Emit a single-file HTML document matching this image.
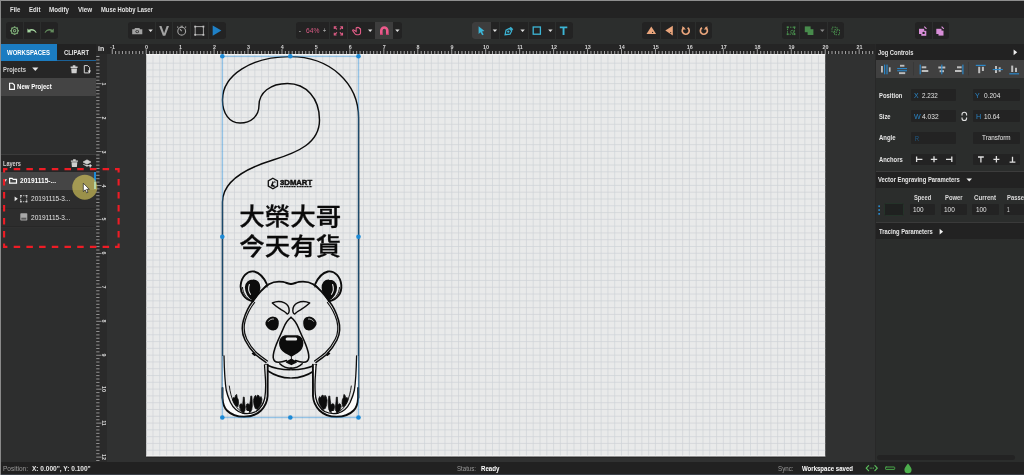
<!DOCTYPE html>
<html lang="zh-Hant">
<head>
<meta charset="utf-8">
<title>Muse Hobby Laser</title>
<style>
*{box-sizing:border-box;margin:0;padding:0}
html,body{width:1024px;height:475px;overflow:hidden}
body{position:relative;background:#303131;color:#e4e4e4;font-family:"Liberation Sans","Noto Sans CJK TC",sans-serif;font-size:8px;line-height:1}
#app{position:absolute;left:0;top:0;width:1024px;height:475px;overflow:hidden;will-change:transform;background:#303131;contain:strict}
.a{position:absolute}
.t{position:absolute;white-space:nowrap;line-height:10px;height:10px;font-weight:bold;color:#e2e2e2;transform-origin:0 50%}
.n{font-weight:normal}
.dim{color:#8d8d8d}
svg{position:absolute;overflow:visible}
#menubar{left:0;top:0;width:1024px;height:18px;background:#232323}
#toolbar{left:0;top:18px;width:1024px;height:26px;background:#2c2e2d}
.grp{position:absolute;top:22px;height:17px;background:#232323;border-radius:3px}
.hl{position:absolute;top:0;height:17px;background:#3d3d3d}
.sep{position:absolute;top:0;width:1px;height:17px;background:#2c2e2d}
#left{left:0;top:44px;width:97px;height:418px;background:#303030}
#right{left:875px;top:44px;width:149px;height:418px;background:#2b2d2c;border-left:1px solid #282828}
#status{left:0;top:462px;width:1024px;height:13px;background:#212121}
#rulerTop{left:96px;top:44px;width:779px;height:10px;background:#252525}
#rulerLeft{left:96px;top:44px;width:11px;height:418px;background:#2a2a2a}
#work{left:107px;top:54px;width:768px;height:408px;background:#303131;overflow:hidden}
.inp{position:absolute;height:12px;background:#232323;border-radius:1px}
.rl{position:absolute;font-size:5.4px;line-height:6px;color:#d6d6d6;font-weight:bold}
#edgeT{left:0;top:0;width:1024px;height:1px;background:#8f8f8f}
#edgeL{left:0;top:0;width:1px;height:475px;background:#8a8a8a}
</style>
</head>
<body>
<div id="app">

<div class="a" id="menubar"></div>
<div class="a" id="toolbar"></div>
<div class="a" id="left"></div>
<div class="a" id="work">
<svg id="canvas" width="768" height="408" viewBox="107 54 768 408" style="left:0;top:0">
<rect x="146.2" y="54" width="679.00" height="402.60" fill="#e9eaea"/>
<path d="M152.99 54V456.6M159.78 54V456.6M166.57 54V456.6M173.36 54V456.6M180.15 54V456.6M186.94 54V456.6M193.73 54V456.6M200.52 54V456.6M207.31 54V456.6M214.10 54V456.6M220.89 54V456.6M227.68 54V456.6M234.47 54V456.6M241.26 54V456.6M248.05 54V456.6M254.84 54V456.6M261.63 54V456.6M268.42 54V456.6M275.21 54V456.6M282.00 54V456.6M288.79 54V456.6M295.58 54V456.6M302.37 54V456.6M309.16 54V456.6M315.95 54V456.6M322.74 54V456.6M329.53 54V456.6M336.32 54V456.6M343.11 54V456.6M349.90 54V456.6M356.69 54V456.6M363.48 54V456.6M370.27 54V456.6M377.06 54V456.6M383.85 54V456.6M390.64 54V456.6M397.43 54V456.6M404.22 54V456.6M411.01 54V456.6M417.80 54V456.6M424.59 54V456.6M431.38 54V456.6M438.17 54V456.6M444.96 54V456.6M451.75 54V456.6M458.54 54V456.6M465.33 54V456.6M472.12 54V456.6M478.91 54V456.6M485.70 54V456.6M492.49 54V456.6M499.28 54V456.6M506.07 54V456.6M512.86 54V456.6M519.65 54V456.6M526.44 54V456.6M533.23 54V456.6M540.02 54V456.6M546.81 54V456.6M553.60 54V456.6M560.39 54V456.6M567.18 54V456.6M573.97 54V456.6M580.76 54V456.6M587.55 54V456.6M594.34 54V456.6M601.13 54V456.6M607.92 54V456.6M614.71 54V456.6M621.50 54V456.6M628.29 54V456.6M635.08 54V456.6M641.87 54V456.6M648.66 54V456.6M655.45 54V456.6M662.24 54V456.6M669.03 54V456.6M675.82 54V456.6M682.61 54V456.6M689.40 54V456.6M696.19 54V456.6M702.98 54V456.6M709.77 54V456.6M716.56 54V456.6M723.35 54V456.6M730.14 54V456.6M736.93 54V456.6M743.72 54V456.6M750.51 54V456.6M757.30 54V456.6M764.09 54V456.6M770.88 54V456.6M777.67 54V456.6M784.46 54V456.6M791.25 54V456.6M798.04 54V456.6M804.83 54V456.6M811.62 54V456.6M818.41 54V456.6M146.2 63.18H825.20M146.2 69.97H825.20M146.2 76.76H825.20M146.2 83.55H825.20M146.2 90.34H825.20M146.2 97.13H825.20M146.2 103.92H825.20M146.2 110.71H825.20M146.2 117.50H825.20M146.2 124.29H825.20M146.2 131.08H825.20M146.2 137.87H825.20M146.2 144.66H825.20M146.2 151.45H825.20M146.2 158.24H825.20M146.2 165.03H825.20M146.2 171.82H825.20M146.2 178.61H825.20M146.2 185.40H825.20M146.2 192.19H825.20M146.2 198.98H825.20M146.2 205.77H825.20M146.2 212.56H825.20M146.2 219.35H825.20M146.2 226.14H825.20M146.2 232.93H825.20M146.2 239.72H825.20M146.2 246.51H825.20M146.2 253.30H825.20M146.2 260.09H825.20M146.2 266.88H825.20M146.2 273.67H825.20M146.2 280.46H825.20M146.2 287.25H825.20M146.2 294.04H825.20M146.2 300.83H825.20M146.2 307.62H825.20M146.2 314.41H825.20M146.2 321.20H825.20M146.2 327.99H825.20M146.2 334.78H825.20M146.2 341.57H825.20M146.2 348.36H825.20M146.2 355.15H825.20M146.2 361.94H825.20M146.2 368.73H825.20M146.2 375.52H825.20M146.2 382.31H825.20M146.2 389.10H825.20M146.2 395.89H825.20M146.2 402.68H825.20M146.2 409.47H825.20M146.2 416.26H825.20M146.2 423.05H825.20M146.2 429.84H825.20M146.2 436.63H825.20M146.2 443.42H825.20M146.2 450.21H825.20" stroke="#cfd2d7" stroke-width=".7" fill="none"/>
<path d="M146.2 54.7H825.20" stroke="#f4f4f4" stroke-width="1.3" fill="none"/><path d="M146.2 456.10H825.20" stroke="#fbfbfb" stroke-width="1" fill="none"/>
<path d="M146.2 457.10H825.20" stroke="#232323" stroke-width="1" fill="none"/>
<g id="art" fill="none" stroke="#0c0c0c" stroke-width="1.45" stroke-linejoin="round" stroke-linecap="round">
<path id="hanger" d="M222.500 398L222.500 202C222.500 183 242 169.500 273 160C298 152.300 319.500 143 319.500 120C319.500 98 306 83.500 287.400 83.500C270 83.500 259 93 259 105.300C259 116 251 123 240 123C229 123 222.500 113 222.500 100C222.500 75 252 56.600 290 56.600C330 56.600 358.600 83 358.600 118L358.600 398"/>
</g>
<g id="logo" fill="#111" stroke="none">
<path d="M272.900 178.200l4.600 2.650v5.300l-4.600 2.650-4.600-2.650v-5.300z" fill="none" stroke="#111" stroke-width="1.300"/>
<path d="M270.600 186.200l2-5.200 1.300 1.100-1 2.300 2.200 1.700-.8 1zM274.300 180.600l1.500 1.600-1.300.7z" fill="#111"/>
<text x="280.100" y="184.750" font-family="'Liberation Sans',sans-serif" font-weight="bold" font-size="6.800" stroke="#111" stroke-width=".45" textLength="32" lengthAdjust="spacingAndGlyphs">3DMART</text>
<path d="M280.100 186.600h2.900M283.800 186.600h12.200M296.800 186.600h15.300" stroke="#111" stroke-width="1.200" stroke-dasharray="1.300 .35" fill="none"/>
</g>
<g id="maintext" font-family="'Liberation Sans','Noto Sans CJK TC',sans-serif" font-weight="500" font-size="23.800" fill="#0a0a0a" stroke="#0a0a0a" stroke-width=".3" stroke-linejoin="round">
<text x="239.300" y="225.200" textLength="101.800" lengthAdjust="spacingAndGlyphs">大榮大哥</text>
<text x="239.300" y="255.200" textLength="101.800" lengthAdjust="spacingAndGlyphs">今天有貨</text>
</g>
<g id="bear" fill="none" stroke="#0c0c0c" stroke-width="1.550" stroke-linejoin="round" stroke-linecap="round">
<g id="bearL">
<path d="M266.700 283.900C264.500 279 260 273 254 271.500C247 270.500 241.500 277 240.700 285C240 293 244.500 299.500 253 301.300" stroke-width="1.900"/>
<path d="M242.500 287.500C243 293 245.500 297.500 250.300 300" stroke-width="1"/>
<path d="M253 280.200C257 280 259.800 283.500 259.600 288C259.400 291.500 257.500 295.500 253.500 300C249 298 245.500 292.500 245.700 287C246 283 249 280.300 253 280.200Z" fill="#0c0c0c"/>
<path d="M249.400 284.500C248.300 287.500 248.600 291.500 250.400 294.300" stroke="#e9eaea" stroke-width="1.100"/>
<path d="M264 287.300l2.600-2.800.5 2.600" stroke-width=".8"/>
<path d="M253 301C257 295 262 289 268.800 284.200C273 281.800 279 281.300 283 281.900C286 282.400 288.500 284 291 284" stroke-width="1.900"/>
<path d="M253 301C249 306 245.500 313 243.500 320C241.500 327 242 334 245 340C248 346 251.500 350.500 255 354C258 357 262 359.500 266 362.500"/>
<path d="M254.600 302.500C250.600 307.500 247.200 314 245.200 320.500C243.500 327 244 333.500 246.700 339C249.700 345 253.200 349.500 256.700 352.800C259.700 355.500 263.200 358 267.500 361" stroke-width="1.200"/>
<path d="M252.500 353.500l2.400 1.800-1.300-2.600"/>
<path d="M272.300 303C276 301.300 281 301.300 284.500 302.800C287.500 304.200 289.300 307.500 289.200 310.800C289 313.300 288 314.300 287 313.800C285.500 312 283.500 310.800 281.500 309.800C278.500 308 275 305.500 272.300 303Z" stroke-width="1.400"/>
<path d="M266.200 322.800C267 319.500 270 317.200 273.500 317.400C276.500 317.600 278.200 320 278 323.500C277.900 326.500 276.800 329.300 274 329.600C271 329.800 268.500 328 267.200 326C266.400 325 266 324 266.200 322.800Z" fill="#0c0c0c"/>
<path d="M268.500 321.300C269.700 319.700 271.500 318.800 273.500 319" stroke="#e9eaea" stroke-width=".8"/>
<path d="M291 317.400C288 319.500 285.500 323 283.500 328C281 334 278.500 339 276.500 344C274.500 349 273 353.500 273.200 357.500C273.500 360.500 275.500 362.300 278.500 362.300C281.500 362.300 284 361.500 286.600 360.600"/>
<path d="M279.800 363.700C282 366 286 368.200 291.400 368.200"/>
<path d="M265.600 364.500C272 367.500 281 369.800 290.300 369.800"/>
<path d="M267.200 370.500C274 375 282 378 290.300 378"/>
</g>
<g id="bearR" transform="translate(582 0) scale(-1 1)">
<path d="M266.700 283.900C264.500 279 260 273 254 271.500C247 270.500 241.500 277 240.700 285C240 293 244.500 299.500 253 301.300" stroke-width="1.900"/>
<path d="M242.500 287.500C243 293 245.500 297.500 250.300 300" stroke-width="1"/>
<path d="M253 280.200C257 280 259.800 283.500 259.600 288C259.400 291.500 257.500 295.500 253.500 300C249 298 245.500 292.500 245.700 287C246 283 249 280.300 253 280.200Z" fill="#0c0c0c"/>
<path d="M249.400 284.500C248.300 287.500 248.600 291.500 250.400 294.300" stroke="#e9eaea" stroke-width="1.100"/>
<path d="M264 287.300l2.600-2.800.5 2.600" stroke-width=".8"/>
<path d="M253 301C257 295 262 289 268.800 284.200C273 281.800 279 281.300 283 281.900C286 282.400 288.500 284 291 284" stroke-width="1.900"/>
<path d="M253 301C249 306 245.500 313 243.500 320C241.500 327 242 334 245 340C248 346 251.500 350.500 255 354C258 357 262 359.500 266 362.500"/>
<path d="M254.600 302.500C250.600 307.500 247.200 314 245.200 320.500C243.500 327 244 333.500 246.700 339C249.700 345 253.200 349.500 256.700 352.800C259.700 355.500 263.200 358 267.500 361" stroke-width="1.200"/>
<path d="M252.500 353.500l2.400 1.800-1.300-2.600"/>
<path d="M272.300 303C276 301.300 281 301.300 284.500 302.800C287.500 304.200 289.300 307.500 289.200 310.800C289 313.300 288 314.300 287 313.800C285.500 312 283.500 310.800 281.500 309.800C278.500 308 275 305.500 272.300 303Z" stroke-width="1.400"/>
<path d="M266.200 322.800C267 319.500 270 317.200 273.500 317.400C276.500 317.600 278.200 320 278 323.500C277.900 326.500 276.800 329.300 274 329.600C271 329.800 268.500 328 267.200 326C266.400 325 266 324 266.200 322.800Z" fill="#0c0c0c"/>
<path d="M268.500 321.300C269.700 319.700 271.500 318.800 273.500 319" stroke="#e9eaea" stroke-width=".8"/>
<path d="M291 317.400C288 319.500 285.500 323 283.500 328C281 334 278.500 339 276.500 344C274.500 349 273 353.500 273.200 357.500C273.500 360.500 275.500 362.300 278.500 362.300C281.500 362.300 284 361.500 286.600 360.600"/>
<path d="M279.800 363.700C282 366 286 368.200 291.400 368.200"/>
<path d="M265.600 364.500C272 367.500 281 369.800 290.300 369.800"/>
<path d="M267.200 370.500C274 375 282 378 290.300 378"/>
</g>
<path d="M285 336L297.700 336C300.500 336.500 302.600 339.500 302.600 343C302.600 347 300.500 350.500 297 352.500C295 353.700 293 354.600 291.400 355.800C289.800 354.600 287.500 353.500 285.500 352.500C282 350.500 279.800 347 279.800 343C279.800 339.500 282 336.500 285 336Z" fill="#0c0c0c"/>
<rect x="285.600" y="337.500" width="11.600" height="3" rx="1.500" fill="#e9eaea" stroke="none"/>
<path d="M291.400 355.800V359.500" stroke-width=".9"/>
<path d="M286.600 362.100L291.400 359.300L296.100 362.100L291.400 364.400Z" fill="#0c0c0c"/>
<g id="legL">
<path d="M222.300 356L222.300 398C222.800 404 224.500 408 227 410.500C231 414.500 237 416.800 244 416.800C251 416.800 257 414.500 261 410.500C265 406.500 267.300 401 267.600 396L267.700 364.800L264.500 364.800L265.500 380C265.800 387 265.600 393 264.800 398C263.500 404 260.500 408.500 256 411.500C252 413.500 247 414 242 413C237 411.500 233 407.500 230.500 402.500C228.500 398 227 394 226.200 390C225 382 224.300 370 224 356Z" fill="#fbfbfb" stroke="none"/>
<path d="M222.500 388L222.500 398C222.800 404 224.500 408 227 410.500C231 414.500 237 416.800 244 416.800C251 416.800 257 414.500 261 410.500C265 406.500 267.300 401 267.600 396L267.700 364.800" stroke-width="1.900"/>
<path d="M224 356C224.300 370 225 382 226.200 390C227 394 228.500 398 230.500 402.500C233 407.500 237 411.500 242 413C247 414 252 413.500 256 411.500C260.500 408.500 263.500 404 264.800 398C265.600 393 265.800 387 265.500 380L264.500 364.800" stroke-width="1.300"/>
<path d="M229.300 386C230 392 231.600 398 234 403C236.500 408 240 411.500 244 412.300" stroke-width=".9"/>
<path d="M232.600 399.500L233.400 397.500L234.800 398L235.600 395.200L236.700 394.400L237.200 397.500L238.300 399.800L238.600 403.500L237.800 406.800L236 406L234.200 403.500Z M239.400 406L240.300 404L241.500 403.700L242.600 405.200L243 401L243.300 397L244.300 397.200L244.600 402L245.200 407L244.800 411.500L243 412.600L240.800 410.500Z M246 406.500L246.800 404L248.300 403.700L249.600 405L250.400 400L250.800 396L251.900 396.200L252.200 401L252.300 406L251.500 411L249.500 412.600L247 410.500Z M253.500 400L254.300 397L255.600 395.200L256.500 397.500L257.600 395L259 395.800L259.800 398L261 396.500L262 399L261.500 403L259.800 406.500L257.500 409.300L255.300 408.500L254 405Z" fill="#0c0c0c" stroke-width=".7"/>
<path d="M245.300 411.600h3.200M252.300 410.800l2.600-1.200" stroke="#f4f4f4" stroke-width="1.300"/>
</g>
<g id="legR" transform="translate(580.600 0) scale(-1 1)">
<path d="M222.300 356L222.300 398C222.800 404 224.500 408 227 410.500C231 414.500 237 416.800 244 416.800C251 416.800 257 414.500 261 410.500C265 406.500 267.300 401 267.600 396L267.700 364.800L264.500 364.800L265.500 380C265.800 387 265.600 393 264.800 398C263.500 404 260.500 408.500 256 411.500C252 413.500 247 414 242 413C237 411.500 233 407.500 230.500 402.500C228.500 398 227 394 226.200 390C225 382 224.300 370 224 356Z" fill="#fbfbfb" stroke="none"/>
<path d="M222.500 388L222.500 398C222.800 404 224.500 408 227 410.500C231 414.500 237 416.800 244 416.800C251 416.800 257 414.500 261 410.500C265 406.500 267.300 401 267.600 396L267.700 364.800" stroke-width="1.900"/>
<path d="M224 356C224.300 370 225 382 226.200 390C227 394 228.500 398 230.500 402.500C233 407.500 237 411.500 242 413C247 414 252 413.500 256 411.500C260.500 408.500 263.500 404 264.800 398C265.600 393 265.800 387 265.500 380L264.500 364.800" stroke-width="1.300"/>
<path d="M229.300 386C230 392 231.600 398 234 403C236.500 408 240 411.500 244 412.300" stroke-width=".9"/>
<path d="M232.600 399.500L233.400 397.500L234.800 398L235.600 395.200L236.700 394.400L237.200 397.500L238.300 399.800L238.600 403.500L237.800 406.800L236 406L234.200 403.500Z M239.400 406L240.300 404L241.500 403.700L242.600 405.200L243 401L243.300 397L244.300 397.200L244.600 402L245.200 407L244.800 411.500L243 412.600L240.800 410.500Z M246 406.500L246.800 404L248.300 403.700L249.600 405L250.400 400L250.800 396L251.900 396.200L252.200 401L252.300 406L251.500 411L249.500 412.600L247 410.500Z M253.500 400L254.300 397L255.600 395.200L256.500 397.500L257.600 395L259 395.800L259.800 398L261 396.500L262 399L261.500 403L259.800 406.500L257.500 409.300L255.300 408.500L254 405Z" fill="#0c0c0c" stroke-width=".7"/>
<path d="M245.300 411.600h3.200M252.300 410.800l2.600-1.200" stroke="#f4f4f4" stroke-width="1.300"/>
</g>
</g>
<g id="sel" fill="none" stroke="#2f95e0" stroke-width="1">
<rect x="222.400" y="56.400" width="136.100" height="361.100" stroke-width="1.400" stroke-opacity=".45"/>
<g fill="#1d8ad6" stroke="none">
<circle cx="222.300" cy="56.300" r="2.300"/><circle cx="290.300" cy="56.300" r="2.300"/><circle cx="358.500" cy="56.300" r="2.300"/>
<circle cx="222.300" cy="236.800" r="2.300"/><circle cx="358.500" cy="236.800" r="2.300"/>
<circle cx="222.300" cy="417.500" r="2.300"/><circle cx="290.300" cy="417.500" r="2.300"/><circle cx="358.500" cy="417.500" r="2.300"/>
</g>
</g>

</svg>
</div>
<div class="a" id="rulerTop"></div><div class="a" id="rulerLeft"></div>
<svg width="1024" height="475" style="left:0;top:0;pointer-events:none"><path d="M112.25 49.2V54M115.64 51V54M119.04 51V54M122.43 51V54M125.83 51V54M129.22 51V54M132.62 51V54M136.01 51V54M139.41 51V54M142.80 51V54M146.20 49.2V54M149.59 51V54M152.99 51V54M156.38 51V54M159.78 51V54M163.17 51V54M166.57 51V54M169.97 51V54M173.36 51V54M176.75 51V54M180.15 49.2V54M183.54 51V54M186.94 51V54M190.33 51V54M193.73 51V54M197.12 51V54M200.52 51V54M203.91 51V54M207.31 51V54M210.70 51V54M214.10 49.2V54M217.50 51V54M220.89 51V54M224.28 51V54M227.68 51V54M231.07 51V54M234.47 51V54M237.87 51V54M241.26 51V54M244.66 51V54M248.05 49.2V54M251.44 51V54M254.84 51V54M258.24 51V54M261.63 51V54M265.02 51V54M268.42 51V54M271.81 51V54M275.21 51V54M278.61 51V54M282.00 49.2V54M285.39 51V54M288.79 51V54M292.19 51V54M295.58 51V54M298.98 51V54M302.37 51V54M305.76 51V54M309.16 51V54M312.56 51V54M315.95 49.2V54M319.35 51V54M322.74 51V54M326.13 51V54M329.53 51V54M332.93 51V54M336.32 51V54M339.72 51V54M343.11 51V54M346.50 51V54M349.90 49.2V54M353.30 51V54M356.69 51V54M360.09 51V54M363.48 51V54M366.88 51V54M370.27 51V54M373.66 51V54M377.06 51V54M380.46 51V54M383.85 49.2V54M387.25 51V54M390.64 51V54M394.04 51V54M397.43 51V54M400.82 51V54M404.22 51V54M407.62 51V54M411.01 51V54M414.41 51V54M417.80 49.2V54M421.19 51V54M424.59 51V54M427.99 51V54M431.38 51V54M434.78 51V54M438.17 51V54M441.56 51V54M444.96 51V54M448.36 51V54M451.75 49.2V54M455.15 51V54M458.54 51V54M461.94 51V54M465.33 51V54M468.73 51V54M472.12 51V54M475.51 51V54M478.91 51V54M482.31 51V54M485.70 49.2V54M489.10 51V54M492.49 51V54M495.89 51V54M499.28 51V54M502.68 51V54M506.07 51V54M509.46 51V54M512.86 51V54M516.25 51V54M519.65 49.2V54M523.05 51V54M526.44 51V54M529.84 51V54M533.23 51V54M536.62 51V54M540.02 51V54M543.41 51V54M546.81 51V54M550.20 51V54M553.60 49.2V54M557.00 51V54M560.39 51V54M563.79 51V54M567.18 51V54M570.58 51V54M573.97 51V54M577.37 51V54M580.76 51V54M584.15 51V54M587.55 49.2V54M590.95 51V54M594.34 51V54M597.74 51V54M601.13 51V54M604.52 51V54M607.92 51V54M611.32 51V54M614.71 51V54M618.11 51V54M621.50 49.2V54M624.89 51V54M628.29 51V54M631.68 51V54M635.08 51V54M638.47 51V54M641.87 51V54M645.27 51V54M648.66 51V54M652.06 51V54M655.45 49.2V54M658.85 51V54M662.24 51V54M665.63 51V54M669.03 51V54M672.42 51V54M675.82 51V54M679.22 51V54M682.61 51V54M686.01 51V54M689.40 49.2V54M692.80 51V54M696.19 51V54M699.59 51V54M702.98 51V54M706.38 51V54M709.77 51V54M713.16 51V54M716.56 51V54M719.95 51V54M723.35 49.2V54M726.75 51V54M730.14 51V54M733.54 51V54M736.93 51V54M740.33 51V54M743.72 51V54M747.12 51V54M750.51 51V54M753.90 51V54M757.30 49.2V54M760.70 51V54M764.09 51V54M767.49 51V54M770.88 51V54M774.28 51V54M777.67 51V54M781.07 51V54M784.46 51V54M787.86 51V54M791.25 49.2V54M794.64 51V54M798.04 51V54M801.43 51V54M804.83 51V54M808.23 51V54M811.62 51V54M815.02 51V54M818.41 51V54M821.81 51V54M825.20 49.2V54M828.60 51V54M831.99 51V54M835.38 51V54M838.78 51V54M842.18 51V54M845.57 51V54M848.97 51V54M852.36 51V54M855.76 51V54M859.15 49.2V54M862.55 51V54M865.94 51V54M869.34 51V54M872.73 51V54" stroke="#a6a6a6" stroke-width="1" fill="none"/><path d="M96.2 56.49H99.5M96.2 59.89H99.5M96.2 63.28H99.5M96.2 66.68H99.5M96.2 70.07H99.5M96.2 73.47H99.5M96.2 76.86H99.5M96.2 80.25H99.5M96.2 83.65H101.5M96.2 87.05H99.5M96.2 90.44H99.5M96.2 93.84H99.5M96.2 97.23H99.5M96.2 100.62H99.5M96.2 104.02H99.5M96.2 107.42H99.5M96.2 110.81H99.5M96.2 114.21H99.5M96.2 117.60H101.5M96.2 121.00H99.5M96.2 124.39H99.5M96.2 127.79H99.5M96.2 131.18H99.5M96.2 134.58H99.5M96.2 137.97H99.5M96.2 141.37H99.5M96.2 144.76H99.5M96.2 148.16H99.5M96.2 151.55H101.5M96.2 154.94H99.5M96.2 158.34H99.5M96.2 161.74H99.5M96.2 165.13H99.5M96.2 168.53H99.5M96.2 171.92H99.5M96.2 175.31H99.5M96.2 178.71H99.5M96.2 182.11H99.5M96.2 185.50H101.5M96.2 188.89H99.5M96.2 192.29H99.5M96.2 195.69H99.5M96.2 199.08H99.5M96.2 202.48H99.5M96.2 205.87H99.5M96.2 209.26H99.5M96.2 212.66H99.5M96.2 216.06H99.5M96.2 219.45H101.5M96.2 222.85H99.5M96.2 226.24H99.5M96.2 229.63H99.5M96.2 233.03H99.5M96.2 236.43H99.5M96.2 239.82H99.5M96.2 243.22H99.5M96.2 246.61H99.5M96.2 250.00H99.5M96.2 253.40H101.5M96.2 256.80H99.5M96.2 260.19H99.5M96.2 263.59H99.5M96.2 266.98H99.5M96.2 270.38H99.5M96.2 273.77H99.5M96.2 277.17H99.5M96.2 280.56H99.5M96.2 283.96H99.5M96.2 287.35H101.5M96.2 290.75H99.5M96.2 294.14H99.5M96.2 297.54H99.5M96.2 300.93H99.5M96.2 304.32H99.5M96.2 307.72H99.5M96.2 311.12H99.5M96.2 314.51H99.5M96.2 317.91H99.5M96.2 321.30H101.5M96.2 324.69H99.5M96.2 328.09H99.5M96.2 331.49H99.5M96.2 334.88H99.5M96.2 338.28H99.5M96.2 341.67H99.5M96.2 345.06H99.5M96.2 348.46H99.5M96.2 351.86H99.5M96.2 355.25H101.5M96.2 358.65H99.5M96.2 362.04H99.5M96.2 365.44H99.5M96.2 368.83H99.5M96.2 372.23H99.5M96.2 375.62H99.5M96.2 379.01H99.5M96.2 382.41H99.5M96.2 385.81H99.5M96.2 389.20H101.5M96.2 392.60H99.5M96.2 395.99H99.5M96.2 399.39H99.5M96.2 402.78H99.5M96.2 406.18H99.5M96.2 409.57H99.5M96.2 412.96H99.5M96.2 416.36H99.5M96.2 419.75H99.5M96.2 423.15H101.5M96.2 426.55H99.5M96.2 429.94H99.5M96.2 433.34H99.5M96.2 436.73H99.5M96.2 440.13H99.5M96.2 443.52H99.5M96.2 446.92H99.5M96.2 450.31H99.5M96.2 453.70H99.5M96.2 457.10H101.5M96.2 460.50H99.5" stroke="#939393" stroke-width="1" fill="none"/></svg>
<div class="rl" style="left:106.5px;top:43.8px;width:12px;text-align:center">-1</div>
<div class="rl" style="left:140.5px;top:43.8px;width:12px;text-align:center">0</div>
<div class="rl" style="left:174.4px;top:43.8px;width:12px;text-align:center">1</div>
<div class="rl" style="left:208.4px;top:43.8px;width:12px;text-align:center">2</div>
<div class="rl" style="left:242.4px;top:43.8px;width:12px;text-align:center">3</div>
<div class="rl" style="left:276.3px;top:43.8px;width:12px;text-align:center">4</div>
<div class="rl" style="left:310.2px;top:43.8px;width:12px;text-align:center">5</div>
<div class="rl" style="left:344.2px;top:43.8px;width:12px;text-align:center">6</div>
<div class="rl" style="left:378.2px;top:43.8px;width:12px;text-align:center">7</div>
<div class="rl" style="left:412.1px;top:43.8px;width:12px;text-align:center">8</div>
<div class="rl" style="left:446.1px;top:43.8px;width:12px;text-align:center">9</div>
<div class="rl" style="left:480.0px;top:43.8px;width:12px;text-align:center">10</div>
<div class="rl" style="left:514.0px;top:43.8px;width:12px;text-align:center">11</div>
<div class="rl" style="left:547.9px;top:43.8px;width:12px;text-align:center">12</div>
<div class="rl" style="left:581.8px;top:43.8px;width:12px;text-align:center">13</div>
<div class="rl" style="left:615.8px;top:43.8px;width:12px;text-align:center">14</div>
<div class="rl" style="left:649.8px;top:43.8px;width:12px;text-align:center">15</div>
<div class="rl" style="left:683.7px;top:43.8px;width:12px;text-align:center">16</div>
<div class="rl" style="left:717.7px;top:43.8px;width:12px;text-align:center">17</div>
<div class="rl" style="left:751.6px;top:43.8px;width:12px;text-align:center">18</div>
<div class="rl" style="left:785.5px;top:43.8px;width:12px;text-align:center">19</div>
<div class="rl" style="left:819.5px;top:43.8px;width:12px;text-align:center">20</div>
<div class="rl" style="left:853.5px;top:43.8px;width:12px;text-align:center">21</div>
<div class="rl" style="left:100.6px;top:80.7px;width:6px;height:6px;text-align:center;transform:rotate(90deg)">1</div>
<div class="rl" style="left:100.6px;top:114.6px;width:6px;height:6px;text-align:center;transform:rotate(90deg)">2</div>
<div class="rl" style="left:100.6px;top:148.6px;width:6px;height:6px;text-align:center;transform:rotate(90deg)">3</div>
<div class="rl" style="left:100.6px;top:182.5px;width:6px;height:6px;text-align:center;transform:rotate(90deg)">4</div>
<div class="rl" style="left:100.6px;top:216.4px;width:6px;height:6px;text-align:center;transform:rotate(90deg)">5</div>
<div class="rl" style="left:100.6px;top:250.4px;width:6px;height:6px;text-align:center;transform:rotate(90deg)">6</div>
<div class="rl" style="left:100.6px;top:284.4px;width:6px;height:6px;text-align:center;transform:rotate(90deg)">7</div>
<div class="rl" style="left:100.6px;top:318.3px;width:6px;height:6px;text-align:center;transform:rotate(90deg)">8</div>
<div class="rl" style="left:100.6px;top:352.2px;width:6px;height:6px;text-align:center;transform:rotate(90deg)">9</div>
<div class="rl" style="left:100.6px;top:386.2px;width:6px;height:6px;text-align:center;transform:rotate(90deg)">10</div>
<div class="rl" style="left:100.6px;top:420.2px;width:6px;height:6px;text-align:center;transform:rotate(90deg)">11</div>
<div class="rl" style="left:100.6px;top:454.1px;width:6px;height:6px;text-align:center;transform:rotate(90deg)">12</div>
<div class="a" style="left:96px;top:44px;width:11px;height:10px;background:#262626"></div>
<div class="t" style="left:98.2px;top:44px;font-size:7.6px;color:#e3e3e3;transform:scaleX(.92)">in</div>
<!-- ===== menu bar ===== -->
<div class="t" style="left:9.8px;top:5.4px;font-size:7.7px;transform:scaleX(0.784)">File</div>
<div class="t" style="left:28.9px;top:5.4px;font-size:7.7px;transform:scaleX(0.784)">Edit</div>
<div class="t" style="left:49.4px;top:5.4px;font-size:7.7px;transform:scaleX(0.810)">Modify</div>
<div class="t" style="left:78.2px;top:5.4px;font-size:7.7px;transform:scaleX(0.816)">View</div>
<div class="t" style="left:101.1px;top:5.4px;font-size:7.7px;transform:scaleX(0.757)">Muse Hobby Laser</div>

<!-- ===== toolbar groups ===== -->
<div class="grp" style="left:6px;width:52px"><div class="sep" style="left:17px"></div><div class="sep" style="left:34px"></div></div>
<div class="grp" style="left:128px;width:98px"><div class="sep" style="left:27px"></div><div class="sep" style="left:44px"></div><div class="sep" style="left:62px"></div><div class="sep" style="left:80px"></div></div>
<div class="grp" style="left:296px;width:106px"><div class="sep" style="left:33px"></div><div class="sep" style="left:51px"></div><div class="hl" style="left:79px;width:18px"></div></div>
<div class="grp" style="left:472px;width:101px"><div class="hl" style="left:0;width:19px;border-radius:3px 0 0 3px"></div><div class="sep" style="left:27px"></div><div class="sep" style="left:56px"></div><div class="sep" style="left:83px"></div></div>
<div class="grp" style="left:642px;width:70px"><div class="sep" style="left:18px"></div><div class="sep" style="left:35px"></div><div class="sep" style="left:53px"></div></div>
<div class="grp" style="left:782px;width:62px"><div class="sep" style="left:17px"></div><div class="sep" style="left:45px"></div></div>
<div class="grp" style="left:915px;width:34px"><div class="sep" style="left:17px"></div></div>

<div class="t" style="left:298.7px;top:26.1px;font-size:7.0px;transform:scaleX(0.772);color:#9a9a9a">-</div>
<div class="t" style="left:305.8px;top:26.2px;font-size:7.2px;transform:scaleX(0.930);font-weight:normal;color:#d95b84">64%</div>
<div class="t" style="left:323.4px;top:26.1px;font-size:7.0px;transform:scaleX(0.734);color:#9a9a9a">+</div>

<svg id="tbicons" width="1024" height="44" viewBox="0 0 1024 44" style="left:0;top:0">
<!-- group 1 : gear / undo / redo -->
<g fill="none" stroke="#79a573" stroke-width="1.1">
<circle cx="14.6" cy="30.7" r="3.2"/><circle cx="14.6" cy="30.7" r="1.2"/>
<path d="M14.6 26.3v1.2M14.6 33.9v1.2M10.2 30.7h1.2M17.8 30.7h1.2M11.5 27.6l.9.9M16.8 32.9l.9.9M11.5 33.8l.9-.9M16.8 28.5l.9-.9" stroke-width="1.5"/>
</g>
<path d="M27.4 28.6l0 4 4-.3-1.3-1.2c1.6-1.1 4-.6 5.6 1.7l1-.1c-1.200-3.400-5-4.900-8-2.900z" fill="#a6d7a1"/>
<path d="M53.800 28.600l0 4-4-.3 1.300-1.200c-1.600-1.100-4-.6-5.600 1.700l-1-.1c1.200-3.400 5-4.900 8-2.900z" fill="#628a5c"/>
<!-- group 2 : camera / V / timer / frame / play -->
<path d="M132.200 29.200h2l.9-1.300h4.200l.9 1.300h2.100v5h-10.100z" fill="#a2a2a2"/><circle cx="137.200" cy="31.600" r="1.700" fill="#232323"/><circle cx="137.200" cy="31.600" r="1" fill="#a2a2a2"/>
<path d="M148.400 29.600h4.400l-2.200 2.500z" fill="#e0e0e0"/>
<path d="M159.200 25.900l3.700 9.900h2.400l3.700-9.900h-2.300l-2.600 7.300-2.600-7.300z" fill="#a3a3a3"/>
<g fill="none" stroke="#a4a4a4" stroke-width="1.100"><circle cx="181.700" cy="31.200" r="3.900"/><path d="M181.700 31.200l-1.700-2M180.500 26.300h2.400M178.200 27.500l-.9-.9M185.200 27.500l.9-.9"/></g>
<g fill="none" stroke="#a8a8a8" stroke-width="1"><rect x="195.200" y="26.600" width="8.200" height="8.200"/></g>
<g fill="#c4c4c4"><rect x="194.300" y="25.700" width="1.800" height="1.800"/><rect x="202.500" y="25.700" width="1.800" height="1.800"/><rect x="194.300" y="33.900" width="1.800" height="1.800"/><rect x="202.500" y="33.900" width="1.800" height="1.800"/></g>
<path d="M212.700 25.500l8.700 5.100-8.700 5.100z" fill="#1f80c6"/>
<!-- group 3 : fit / hand / magnet -->
<g stroke="#e05c86" stroke-width="1.200" fill="none">
<path d="M334.600 27.100l2.300 2.300M342.200 27.100l-2.300 2.300M334.600 34.700l2.300-2.300M342.200 34.700l-2.300-2.300"/>
<path d="M334.300 29v-2.200h2.200M340.300 26.800h2.200v2.200M334.300 32.800v2.200h2.200M340.300 35h2.200v-2.200" stroke-width="1.100"/>
</g>
<g transform="translate(356.600 31) scale(.86) translate(-356.600 -31)"><path d="M353.400 29.800c-.9-.7-1.900.2-1.200 1.100l2.600 3.400c.6.700 1.300 1 2.200 1h1.700c1.600 0 2.500-1 2.500-2.500v-3.900c0-.9-1.200-.9-1.200 0v-1.100c0-.9-1.300-.9-1.300 0v-.5c0-.9-1.300-.9-1.300 0v.4c0-.9-1.300-.9-1.300 0v3.900z" fill="none" stroke="#e05c86" stroke-width="1.250"/></g>
<path d="M368 29.600h4.400l-2.200 2.500z" fill="#e0e0e0"/>
<path d="M381.300 35v-4.500a3 3 0 0 1 6 0v4.500" fill="none" stroke="#ee5a8c" stroke-width="2.600"/><path d="M380 34.300h2.600M386 34.300h2.600" stroke="#b83a68" stroke-width="1" fill="none"/>
<path d="M395.200 29.600h4.400l-2.200 2.500z" fill="#e0e0e0"/>
<!-- group 4 : pointer / pen / rect / T -->
<path d="M478.600 26.300l5.900 4.700-2.500.4 1.700 3.100-1.500.8-1.700-3.100-1.900 1.700z" fill="#3cb5d6"/>
<path d="M492.700 29.600h4.400l-2.200 2.500z" fill="#e0e0e0"/>
<g fill="none" stroke="#3cb5d6" stroke-width="1.200"><path d="M505.100 34.700l.9-4.500 3.300-1.700 2.400 2.400-1.700 3.300z"/><path d="M510.100 27.300l2.500 2.500" stroke-width="1.800"/><circle cx="508.300" cy="31.600" r=".6"/></g>
<path d="M520.400 29.600h4.400l-2.200 2.500z" fill="#e0e0e0"/>
<rect x="533.200" y="27" width="7.200" height="7.200" fill="none" stroke="#3cb5d6" stroke-width="1.300"/>
<path d="M548.200 29.600h4.400l-2.200 2.500z" fill="#e0e0e0"/>
<path d="M559.800 26.400h7.500v1.800h-2.800v6.800h-1.900v-6.800h-2.800z" fill="#3cb5d6"/>
<!-- group 5 : flip / rotate -->
<g fill="#eaa57c">
<path d="M651.300 26.500l4.800 7.400h-9.600z"/>
<path d="M665.300 30.500l7.500-4.700v9.700z"/>
</g>
<circle cx="652.600" cy="32.400" r=".6" fill="#232323"/><circle cx="670.700" cy="32.600" r=".6" fill="#232323"/>
<g fill="none" stroke="#eaa57c" stroke-width="1.700">
<path d="M684.200 27.600a3.500 3.500 0 1 0 3.400.2"/>
<path d="M705.400 27.600a3.500 3.500 0 1 1-3.400.2"/>
</g>
<path d="M682.300 26v3.600h3.600z" fill="#eaa57c"/><path d="M707.300 26v3.600h-3.600z" fill="#eaa57c"/>
<!-- group 6 : group / combine / ungroup -->
<g fill="none" stroke="#488b4c" stroke-width="1" stroke-dasharray="1.500 1">
<rect x="787.500" y="27.200" width="7" height="7"/><rect x="832" y="27.200" width="5" height="5"/><rect x="834.500" y="29.700" width="5" height="5"/>
</g>
<g fill="#488b4c"><rect x="786.700" y="26.400" width="1.800" height="1.800"/><rect x="793.600" y="26.400" width="1.800" height="1.800"/><rect x="786.700" y="33.300" width="1.800" height="1.800"/><rect x="793.600" y="33.300" width="1.800" height="1.800"/>
<rect x="804.800" y="26.400" width="5.800" height="5.800"/><rect x="807.600" y="29.200" width="5.800" height="5.800"/></g>
<circle cx="792.200" cy="31.800" r="1.500" fill="none" stroke="#488b4c" stroke-width=".8"/>
<path d="M820.100 29.600h4.400l-2.200 2.500z" fill="#8b8b8b"/>
<!-- group 7 : pink -->
<g fill="#d98fd9">
<rect x="919" y="28.800" width="5.200" height="5.200"/><rect x="921.300" y="30.800" width="5" height="5"/>
<rect x="936.300" y="28.800" width="5.200" height="5.200"/><rect x="938.500" y="30.600" width="5" height="5"/>
</g>
<circle cx="923.600" cy="32.900" r="1.200" fill="#232323"/>
<path d="M924.300 26.700l2.200 2.200M941.600 26.700l2.200 2.200" stroke="#d98fd9" stroke-width="1.200" fill="none"/>
</svg>

<!-- ===== left panel ===== -->
<div class="a" style="left:0;top:44px;width:96px;height:17px;background:#222"></div>
<div class="a" style="left:0;top:44px;width:57px;height:17px;background:#1b7cc1"></div>
<div class="a" style="left:57px;top:60px;width:39px;height:1px;background:#1c6196"></div>
<div class="t" style="left:7.1px;top:48.0px;font-size:7.1px;transform:scaleX(0.843);color:#ffffff">WORKSPACES</div>
<div class="t" style="left:63.7px;top:48.0px;font-size:7.1px;transform:scaleX(0.830);color:#e6e6e6">CLIPART</div>
<div class="a" style="left:0;top:61px;width:96px;height:17px;background:#262626"></div>
<div class="t" style="left:3.0px;top:65.2px;font-size:7.4px;transform:scaleX(0.791);color:#cfcfcf">Projects</div>
<div class="a" style="left:0;top:78px;width:96px;height:18px;background:#444"></div>
<div class="t" style="left:17.0px;top:82.3px;font-size:7.4px;transform:scaleX(0.822);color:#ffffff">New Project</div>
<div class="a" style="left:0;top:96px;width:96px;height:58px;background:#2d2e2e"></div>
<div class="a" style="left:0;top:154px;width:96px;height:1px;background:#3b3b3b"></div>
<div class="a" style="left:0;top:155px;width:96px;height:17px;background:#262626"></div>
<div class="t" style="left:3.0px;top:159.2px;font-size:7.4px;transform:scaleX(0.754);color:#cfcfcf">Layers</div>
<div class="a" style="left:0;top:172px;width:96px;height:18px;background:#454545"></div>
<div class="a" style="left:94px;top:172px;width:2px;height:10px;background:#1e8ad6"></div>
<div class="a" style="left:94px;top:182px;width:2px;height:7px;background:#8fc39a"></div>
<div class="t" style="left:19.9px;top:176.2px;font-size:7.4px;transform:scaleX(0.884);color:#ffffff">20191115-...</div>
<div class="a" style="left:0;top:190px;width:96px;height:18px;background:#2d2d2d"></div>
<div class="a" style="left:0;top:207.500px;width:96px;height:1px;background:#272727"></div>
<div class="t" style="left:31.0px;top:194.4px;font-size:7.4px;transform:scaleX(0.886);font-weight:normal;color:#e4e4e4">20191115-3...</div>
<div class="a" style="left:0;top:209px;width:96px;height:18px;background:#2d2d2d"></div>
<div class="a" style="left:0;top:226.400px;width:96px;height:1px;background:#272727"></div>
<div class="t" style="left:31.0px;top:212.6px;font-size:7.4px;transform:scaleX(0.886);font-weight:normal;color:#e4e4e4">20191115-3...</div>
<div class="a" style="left:0;top:228px;width:96px;height:234px;background:#2d2e2e"></div>
<svg id="lefticons" width="97" height="260" viewBox="0 0 97 260" style="left:0;top:0">
<path d="M32.200 67.500h6.200l-3.100 3.600z" fill="#e6e6e6"/>
<g fill="#cfcfcf">
<path d="M70.600 66.600h7v1.300h-7zM72.800 65.300h2.600v1.300h-2.600zM71.200 68.400h5.800l-.4 4.800h-5z"/>
<path d="M70.900 160.500h7v1.300h-7zM73.100 159.200h2.600v1.300h-2.600zM71.500 162.300h5.800l-.4 4.800h-5z"/>
</g>
<path d="M84.300 65.600h3.400l1.900 1.900v5.400h-5.300z" fill="none" stroke="#d8d8d8" stroke-width="1"/>
<path d="M87.600 70.600h3.400l-1.700 2.500z" fill="#e6e6e6"/>
<path d="M9.600 83.300h3l1.800 1.800v4.300h-4.800z" fill="none" stroke="#ffffff" stroke-width="1.100"/>
<path d="M83 162l4-2.200 4 2.200-4 2.200zM83 164.200l4 2.200 2-1.100" fill="#cfcfcf" stroke="#cfcfcf" stroke-width=".6" stroke-linejoin="round"/>
<path d="M90.200 164.200v3.200M88.600 165.800h3.200" stroke="#e6e6e6" stroke-width="1.100" fill="none"/>
<path d="M3.600 179.200h3.400l-1.700 2.600z" fill="#e6e6e6"/>
<path d="M9.600 178.400h2.600l.9.900h3.400v3.900h-6.900z" fill="none" stroke="#ffffff" stroke-width="1.200"/>
<path d="M14.600 196.400l3.200 2.400-3.200 2.400z" fill="#e6e6e6"/>
<g fill="none" stroke="#bdbdbd" stroke-width=".9" stroke-dasharray="1.400 1"><rect x="20.700" y="195.700" width="6" height="6"/></g>
<g fill="#cfcfcf"><rect x="20" y="195" width="1.600" height="1.600"/><rect x="25.800" y="195" width="1.600" height="1.600"/><rect x="20" y="200.800" width="1.600" height="1.600"/><rect x="25.800" y="200.800" width="1.600" height="1.600"/></g>
<rect x="20.300" y="213.200" width="7" height="7.400" rx=".8" fill="#a8a8a8"/>
<rect x="21.300" y="217.700" width="5" height="1.900" fill="#5a5a5a"/>
</svg>

<!-- ===== right panel ===== -->
<div class="a" id="right"></div>
<div class="a" style="left:876px;top:44px;width:148px;height:16px;background:#222"></div>
<div class="t" style="left:878.4px;top:48.0px;font-size:7.4px;transform:scaleX(0.776);color:#e0e0e0">Jog Controls</div>
<div class="a" style="left:876px;top:60px;width:148px;height:17.500px;background:#404040"></div>
<div class="t" style="left:879.0px;top:90.8px;font-size:7.4px;transform:scaleX(0.802);color:#e6e6e6">Position</div>
<div class="inp" style="left:911.400px;top:89.300px;width:45px;height:11.600px"></div>
<div class="inp" style="left:973px;top:89.300px;width:47.400px;height:11.600px"></div>
<div class="t" style="left:914.2px;top:90.9px;font-size:7.4px;transform:scaleX(0.932);font-weight:normal;color:#2a86c8">X</div>
<div class="t" style="left:922.4px;top:90.9px;font-size:7.2px;transform:scaleX(0.877);font-weight:normal;color:#e2e2e2">2.232</div>
<div class="t" style="left:975.4px;top:90.9px;font-size:7.4px;transform:scaleX(0.952);font-weight:normal;color:#2a86c8">Y</div>
<div class="t" style="left:983.6px;top:90.9px;font-size:7.2px;transform:scaleX(0.905);font-weight:normal;color:#e2e2e2">0.204</div>
<div class="t" style="left:879.0px;top:112.1px;font-size:7.4px;transform:scaleX(0.777);color:#e6e6e6">Size</div>
<div class="inp" style="left:911.400px;top:110.400px;width:45px;height:11.600px"></div>
<div class="inp" style="left:973px;top:110.400px;width:47.400px;height:11.600px"></div>
<div class="t" style="left:914.2px;top:112.1px;font-size:7.4px;transform:scaleX(0.959);font-weight:normal;color:#2a86c8">W</div>
<div class="t" style="left:922.1px;top:112.1px;font-size:7.2px;transform:scaleX(0.921);font-weight:normal;color:#e2e2e2">4.032</div>
<div class="t" style="left:975.7px;top:112.1px;font-size:7.4px;transform:scaleX(0.973);font-weight:normal;color:#2a86c8">H</div>
<div class="t" style="left:984.0px;top:112.1px;font-size:7.2px;transform:scaleX(0.882);font-weight:normal;color:#e2e2e2">10.64</div>
<div class="t" style="left:879.0px;top:133.4px;font-size:7.4px;transform:scaleX(0.808);color:#e6e6e6">Angle</div>
<div class="inp" style="left:911.400px;top:132px;width:45px;height:11.600px"></div>
<div class="inp" style="left:973px;top:132px;width:47.400px;height:11.600px"></div>
<div class="t" style="left:914.5px;top:133.5px;font-size:7.4px;transform:scaleX(0.748);font-weight:normal;color:#1f5f8f">R</div>
<div class="t" style="left:982.2px;top:133.4px;font-size:7.2px;transform:scaleX(0.882);font-weight:normal;color:#e6e6e6">Transform</div>
<div class="t" style="left:879.0px;top:154.8px;font-size:7.4px;transform:scaleX(0.790);color:#e6e6e6">Anchors</div>
<div class="inp" style="left:911.400px;top:153.600px;width:45px;height:11.300px"></div>
<div class="inp" style="left:973px;top:153.600px;width:47.400px;height:11.300px"></div>
<div class="a" style="left:876px;top:170.500px;width:148px;height:1.300px;background:#3c3c3c"></div>
<div class="a" style="left:876px;top:171.800px;width:148px;height:16px;background:#222"></div>
<div class="t" style="left:877.9px;top:175.0px;font-size:7.4px;transform:scaleX(0.794);color:#e6e6e6">Vector Engraving Parameters</div>
<div class="t" style="left:913.8px;top:193.2px;font-size:7.2px;transform:scaleX(0.801);color:#dcdcdc">Speed</div>
<div class="t" style="left:945.0px;top:193.2px;font-size:7.2px;transform:scaleX(0.819);color:#dcdcdc">Power</div>
<div class="t" style="left:974.1px;top:193.2px;font-size:7.2px;transform:scaleX(0.850);color:#dcdcdc">Current</div>
<div class="t" style="left:1007.3px;top:193.2px;font-size:7.2px;transform:scaleX(0.814);color:#dcdcdc">Passes</div>
<div class="a" style="left:884.200px;top:203px;width:19.800px;height:12.500px;background:#1f2120;border:1px solid #243329;border-radius:1.500px"></div>
<div class="inp" style="left:909.800px;top:203.700px;width:25.600px;height:11.800px"></div>
<div class="inp" style="left:940.900px;top:203.700px;width:26.100px;height:11.800px"></div>
<div class="inp" style="left:972.200px;top:203.700px;width:26.400px;height:11.800px"></div>
<div class="inp" style="left:1003.800px;top:203.700px;width:21px;height:11.800px"></div>
<div class="t" style="left:913.0px;top:205.2px;font-size:7.2px;transform:scaleX(0.891);font-weight:normal;color:#e2e2e2">100</div>
<div class="t" style="left:944.0px;top:205.2px;font-size:7.2px;transform:scaleX(0.899);font-weight:normal;color:#e2e2e2">100</div>
<div class="t" style="left:975.7px;top:205.2px;font-size:7.2px;transform:scaleX(0.891);font-weight:normal;color:#e2e2e2">100</div>
<div class="t" style="left:1007.0px;top:205.2px;font-size:7.2px;transform:scaleX(0.649);font-weight:normal;color:#e2e2e2">1</div>
<div class="a" style="left:876px;top:221.800px;width:148px;height:1.200px;background:#3a3a3a"></div>
<div class="a" style="left:876px;top:223px;width:148px;height:16.200px;background:#222"></div>
<div class="t" style="left:878.5px;top:227.3px;font-size:7.4px;transform:scaleX(0.782);color:#e6e6e6">Tracing Parameters</div>
<div class="a" style="left:877px;top:455px;width:138px;height:5px;background:#232323;border-radius:2.500px"></div>
<svg id="righticons" width="160" height="200" viewBox="864 44 160 200" style="left:864px;top:44px">
<path d="M1013.600 49.400l3.600 2.900-3.600 2.900z" fill="#f0f0f0"/>
<!-- align icons -->
<g fill="#bdbdbd">
<rect x="881" y="66" width="1.900" height="6.500"/><rect x="888.900" y="67.300" width="1.700" height="4.500"/>
<rect x="900" y="64.800" width="4.400" height="1.900"/><rect x="899" y="72.200" width="6.200" height="1.900"/>
<rect x="921.700" y="66.300" width="4.600" height="2"/><rect x="921.700" y="70" width="6.600" height="2"/>
<rect x="938.300" y="66.500" width="7" height="2"/><rect x="939.600" y="70.200" width="4.400" height="2"/>
<rect x="957" y="66.300" width="4.600" height="2"/><rect x="955" y="70" width="6.600" height="2"/>
<rect x="978.200" y="66.800" width="2" height="6.400"/><rect x="981.900" y="66.800" width="2" height="4.200"/>
<rect x="995" y="66" width="2" height="7"/><rect x="998.700" y="67.300" width="2" height="4.400"/>
<rect x="1011.200" y="65.600" width="2" height="6.400"/><rect x="1015" y="67.800" width="2" height="4.200"/>
</g>
<g fill="#2a86c8">
<rect x="884" y="64.600" width="1.200" height="9.700"/><rect x="886.400" y="64.600" width="1.200" height="9.700"/>
<rect x="897.200" y="68" width="9.800" height="1.100"/><rect x="897.200" y="70.200" width="9.800" height="1.100"/>
<rect x="919.600" y="64.600" width="1.200" height="9.700"/>
<rect x="941.200" y="64.600" width="1.200" height="9.700"/>
<rect x="962.300" y="64.600" width="1.200" height="9.700"/>
<rect x="975.800" y="64.800" width="9.800" height="1.200"/>
<rect x="992.700" y="69" width="10.200" height="1.100"/>
<rect x="1009.300" y="73.200" width="9.800" height="1.200"/>
</g>
<rect x="913" y="62" width="1" height="13.500" fill="#383838"/><rect x="968" y="62" width="1" height="13.500" fill="#383838"/>
<!-- link icon -->
<g fill="none" stroke="#e0e0e0" stroke-width="1.100"><path d="M962 115.400v-.8a2.300 2.300 0 0 1 4.600 0v.8M962 117.400v.8a2.300 2.300 0 0 0 4.600 0v-.8"/></g>
<!-- anchors -->
<g fill="none" stroke="#e0e0e0" stroke-width="1.300">
<path d="M916.600 156.600v5.400M916.600 159.300h5.800"/>
<path d="M934 156.300v6M930.800 159.300h6.400"/>
<path d="M951.800 156.600v5.400M951.800 159.300h-5.800"/>
<path d="M978 157h5.800M980.900 157v5.400"/>
<path d="M993.400 159.300h6M996.400 156.100v6.400"/>
<path d="M1009.600 162.200h5.800M1012.500 162.200v-5.400"/>
</g>
<path d="M966.400 178.400h5.600l-2.800 3.200z" fill="#f0f0f0"/>
<path d="M939.600 228.800l3.500 2.900-3.500 2.900z" fill="#f0f0f0"/>
<g fill="#2a86c8"><rect x="878.300" y="205.400" width="1.700" height="1.700"/><rect x="878.300" y="209.200" width="1.700" height="1.700"/><rect x="878.300" y="213" width="1.700" height="1.700"/></g>
</svg>

<!-- ===== status bar ===== -->
<div class="a" id="status"></div>
<div class="a" style="left:0;top:474px;width:1024px;height:1px;background:#3a3f46"></div>
<div class="t" style="left:3.1px;top:463.6px;font-size:7.2px;transform:scaleX(0.905);font-weight:normal;color:#9a9a9a">Position:</div>
<div class="t" style="left:32.3px;top:463.6px;font-size:7.0px;transform:scaleX(0.935);color:#e6e6e6">X: 0.000&quot;, Y: 0.100&quot;</div>
<div class="t" style="left:457.0px;top:463.6px;font-size:7.2px;transform:scaleX(0.848);font-weight:normal;color:#9a9a9a">Status:</div>
<div class="t" style="left:481.0px;top:463.6px;font-size:7.0px;transform:scaleX(0.880);color:#ffffff">Ready</div>
<div class="t" style="left:778.0px;top:463.6px;font-size:7.2px;transform:scaleX(0.861);font-weight:normal;color:#9a9a9a">Sync:</div>
<div class="t" style="left:802.0px;top:463.6px;font-size:7.0px;transform:scaleX(0.864);color:#ffffff">Workspace saved</div>
<svg id="staticons" width="60" height="13" viewBox="860 462 60 13" style="left:860px;top:462px">
<g fill="none" stroke="#5cc05c" stroke-width="1.200" stroke-linejoin="round" stroke-linecap="round">
<path d="M868.600 465.600l-2.400 2.500 2.400 2.500M874.900 465.600l2.400 2.500-2.400 2.500"/>
<rect x="885.500" y="467" width="9.200" height="2.400" rx=".6" stroke="#4aa64a" stroke-width="1"/>
</g>
<g fill="#5cc05c"><rect x="869.700" y="467.600" width="1" height="1"/><rect x="871.300" y="467.600" width="1" height="1"/><rect x="872.900" y="467.600" width="1" height="1"/></g>
<path d="M908 463.600c1.600 2.200 3.600 4.200 3.600 6.100a3.600 3.600 0 0 1-7.200 0c0-1.900 2-3.900 3.600-6.100z" fill="#4cae4c"/>
</svg>

<!-- ===== annotation overlay ===== -->
<svg id="overlay" width="1024" height="475" viewBox="0 0 1024 475" style="left:0;top:0;pointer-events:none">
<path d="M13.7 169.1h6.5M13.7 246.9h6.5M26.4 169.1h6.5M26.4 246.9h6.5M39.1 169.1h6.5M39.1 246.9h6.5M51.8 169.1h6.5M51.8 246.9h6.5M64.5 169.1h6.5M64.5 246.9h6.5M77.2 169.1h6.5M77.2 246.9h6.5M89.9 169.1h6.5M89.9 246.9h6.5M102.6 169.1h6.5M102.6 246.9h6.5M4.1 178.9v6.5M118.6 178.9v6.5M4.1 191.9v6.5M118.6 191.9v6.5M4.1 204.9v6.5M118.6 204.9v6.5M4.1 217.9v6.5M118.6 217.9v6.5M4.1 230.9v6.5M118.6 230.9v6.5M4.1 172.4V169.1H7.4M115 169.1H118.6V172.4M4.1 243.6V246.9H7.4M115 246.9H118.6V243.6" fill="none" stroke="#ee1c25" stroke-width="2.100"/>
<circle cx="84.800" cy="187.200" r="12.500" fill="#d7c85a" fill-opacity=".65"/>
<rect x="94" y="182" width="2" height="7" fill="#b4d8ae" fill-opacity=".9"/>
<path d="M83.300 183.200v8.400l1.900-1.800 1.400 3.100 1.400-.6-1.400-3h2.700z" fill="#ffffff" stroke="#222" stroke-width=".7" stroke-linejoin="round"/>
</svg>
<div class="a" id="edgeT"></div><div class="a" id="edgeL"></div>

</div>
</body>
</html>
